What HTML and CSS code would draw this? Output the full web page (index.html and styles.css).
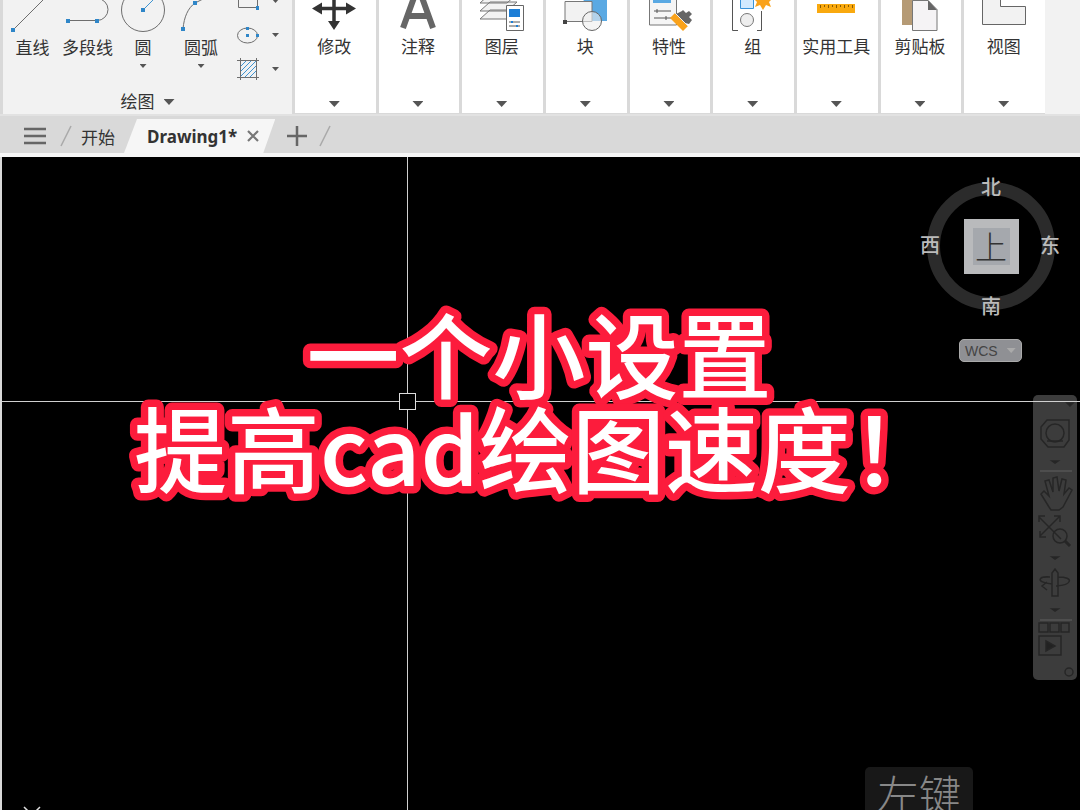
FILE: index.html
```html
<!DOCTYPE html>
<html lang="zh-CN">
<head>
<meta charset="utf-8">
<title>Drawing1*</title>
<link rel="stylesheet" href="styles.css">
</head>
<body>
<div class="app">
  <header class="ribbon">
    <section class="draw-panel">
      <div class="tools">
        <button class="tool">
          <svg width="46" height="34" viewBox="0 0 46 34"><path d="M3 30 35-2" class="ln"/><path d="M1 28h4v4H1z" class="node"/></svg>
          <span>直线</span>
        </button>
        <button class="tool">
          <svg width="48" height="34" viewBox="0 0 48 34"><path d="M4 20.500h29a10 10 0 0 0 0-22" class="ln"/><path d="M2 19h4v4H2zM31 19h4v4h-4zM31-3h4v3h-4z" class="node"/></svg>
          <span>多段线</span>
        </button>
        <button class="tool">
          <svg width="46" height="34" viewBox="0 0 46 34"><circle cx="23" cy="10" r="21.500" class="ln"/><path d="M23 10 36-3" class="blue"/><path d="M21 8h4v4h-4z" class="node"/></svg>
          <span>圆</span><i class="caret small"></i>
        </button>
        <button class="tool">
          <svg width="46" height="34" viewBox="0 0 46 34"><path d="M5 29C6 17 10 8 17 3L27-2" class="ln"/><path d="M3 27h4v4H3zM15 1h4v4h-4z" class="node"/></svg>
          <span>圆弧</span><i class="caret small"></i>
        </button>
        <div class="mini-tools">
          <button class="mini" aria-label="矩形"><svg width="24" height="24" viewBox="0 0 24 24"><path d="M2.500-2v20.500h19V-2" class="ln"/><path d="M20 17h3v4h-3z" class="node"/></svg><i class="caret small"></i></button>
          <button class="mini" aria-label="椭圆"><svg width="24" height="24" viewBox="0 0 24 24"><ellipse cx="11.500" cy="12.500" rx="10" ry="7.500" class="ln"/><path d="M10 4h3v3h-3zM10 11h3v3h-3zM20 11h3v3h-3z" class="node"/></svg><i class="caret small"></i></button>
          <button class="mini" aria-label="图案填充"><svg width="24" height="24" viewBox="0 0 24 24"><path d="m4 10 6-6M4 15 15 4M4 20 20 4M9 20 20 9M14 20l6-6" class="blue"/><path d="M4.500 1v22M20.500 1v22M1 3.500h22M1 20.500h22" class="ln"/></svg><i class="caret small"></i></button>
        </div>
      </div>
      <button class="panel-title">绘图<i class="caret"></i></button>
    </section>

    <button class="panel">
      <svg width="46" height="34" viewBox="0 0 46 34"><path d="M23-6v32M6 8.500h34" stroke="#333" stroke-width="3.500"/><path d="m1 8.500 10-6v12zM45 8.500l-10-6v12zM23 30l-6-9h12z" fill="#333"/></svg>
      <span>修改</span><i class="caret"></i>
    </button>
    <button class="panel">
      <svg width="46" height="34" viewBox="0 0 46 34"><path d="M8 28 21-8h4l13 36M12 16h22" fill="none" stroke="#666" stroke-width="6"/></svg>
      <span>注释</span><i class="caret"></i>
    </button>
    <button class="panel">
      <svg width="46" height="34" viewBox="0 0 46 34"><g fill="#f2f2f2" stroke="#777"><path d="m1 19 10-9h27l-10 9zM1 11l10-9h27l-10 9zM1 3l10-9h27L28 3z"/></g><path d="M27.500 5.500h17v25h-17z" fill="#fff" stroke="#666"/><path d="M30 9h11v8H30z" fill="#1c7ed6"/><path d="M30 22h11M30 26h11" stroke="#555"/><path d="M32 21h2v2h-2zM37 25h2v2h-2z" fill="#1c7ed6"/></svg>
      <span>图层</span><i class="caret"></i>
    </button>
    <button class="panel">
      <svg width="46" height="34" viewBox="0 0 46 34"><path d="M21-1h24v22H30z" fill="#5aa9e3"/><path d="M3 1.500h27v20H3z" fill="#f2f2f2" stroke="#777"/><circle cx="30" cy="21" r="9.500" fill="#eee" fill-opacity=".6" stroke="#666"/><path d="M1 20h4v4H1z" fill="#444"/></svg>
      <span>块</span><i class="caret"></i>
    </button>
    <button class="panel">
      <svg width="46" height="34" viewBox="0 0 46 34"><path d="M3.500-2h27v27h-27z" fill="#f5f5f5" stroke="#777"/><path d="M7-2h18v5H7z" fill="#5aa9e3"/><path d="M8 11h17M8 18h17M11 9v4M20 16v4" stroke="#555"/><path d="m30 14 6-3 1-1 3 3 3-2 3 3-3 3 3 3-3 4-4-1z" fill="#666"/><path d="m24 18 5-5 13 13-5 5z" fill="#f9a21b"/><path d="m29 13 13 13" stroke="#eee"/></svg>
      <span>特性</span><i class="caret"></i>
    </button>
    <button class="panel">
      <svg width="46" height="34" viewBox="0 0 46 34"><path d="M8 30.500H2.500V-2M27 30.500h4.500V11" fill="none" stroke="#555"/><path d="M10.500-2h13V8.500h-13z" fill="#d2eaff" stroke="#3a93d9"/><circle cx="17" cy="20" r="6.500" fill="#eee" stroke="#777"/><path d="m42-1-3 3 2 5-5-2-3 5-3-5-5 2 2-5-3-3z" fill="#f9a21b"/></svg>
      <span>组</span><i class="caret"></i>
    </button>
    <button class="panel">
      <svg width="46" height="34" viewBox="0 0 46 34"><path d="M4 4h38v9H4z" fill="#f9a90f"/><path d="M7.500 5v3M11.500 5v2M15.500 5v3M19.500 5v2M23.500 5v3M27.500 5v2M31.500 5v3M35.500 5v2M39.500 5v3" stroke="#8a5a00"/></svg>
      <span>实用工具</span><i class="caret"></i>
    </button>
    <button class="panel">
      <svg width="46" height="34" viewBox="0 0 46 34"><path d="M5-2h24v27H5z" fill="#b59a75"/><path d="M15.500.5H31l9 9v21H15.500z" fill="#f5f3f5" stroke="#777"/><path d="M31 0v10h9z" fill="#666"/></svg>
      <span>剪贴板</span><i class="caret"></i>
    </button>
    <button class="panel">
      <svg width="46" height="34" viewBox="0 0 46 34"><path d="M1.500-2v26.500h43v-18h-25V-2" fill="#f2f2f2" stroke="#666"/></svg>
      <span>视图</span><i class="caret"></i>
    </button>
  </header>

  <nav class="tabs">
    <button class="icon-btn menu" aria-label="菜单"><svg width="22" height="18" viewBox="0 0 22 18"><path d="M0 2h22M0 9h22M0 16h22" stroke="#666" stroke-width="2.500"/></svg></button>
    <svg class="slash" width="12" height="22" viewBox="0 0 12 22"><path d="M1 21 11 1" stroke="#aaa" stroke-width="1.500"/></svg>
    <button class="tab">开始</button>
    <button class="tab active">Drawing1*<svg width="12" height="12" viewBox="0 0 12 12"><path d="m1 1 10 10M11 1 1 11" stroke="#777" stroke-width="2.200"/></svg></button>
    <button class="icon-btn" aria-label="新建"><svg width="20" height="20" viewBox="0 0 20 20"><path d="M0 10h20M10 0v20" stroke="#666" stroke-width="2.500"/></svg></button>
    <svg class="slash" width="12" height="22" viewBox="0 0 12 22"><path d="M1 21 11 1" stroke="#aaa" stroke-width="1.500"/></svg>
  </nav>

  <main class="canvas">
    <div class="viewcube">
      <span class="dir north">北</span><span class="dir west">西</span>
      <button class="cube"><span>上</span></button>
      <span class="dir east">东</span><span class="dir south">南</span>
    </div>
    <button class="wcs">WCS<i></i></button>

    <aside class="navbar">
      <svg width="44" height="285" viewBox="0 0 44 285" fill="none" stroke="#262626" stroke-width="1.500">
        <path d="M34 8h6l-3 3z" fill="#222"/>
        <path d="M14 25h22v20l-5 7H15l-7-8V32z"/><circle cx="22" cy="38" r="9"/><path d="M14 46h16"/>
        <path d="m19 66 3 2 3-2z" fill="#222"/><path d="M7 76h32" stroke="#555"/>
        <path d="m16 112-8-13 3-3 5 5-4-15 4-1 4 12V83l4-1 2 14 3-12 4 1-2 14 5-6 3 2-9 17-4 3H18z"/>
        <path d="m6 122 22 22M27 121 7 141M6 127v-6h6M21 121h6v6M7 136v6h6"/><circle cx="27" cy="141" r="7"/><path d="m32 146 5 5" stroke-width="3"/>
        <path d="m19 162 3 2 3-2z" fill="#222"/>
        <path d="M19 201v-23l3-4 3 4v23zM19 189c-18-2-13-8-2-7M25 182c17 0 14 8-2 9M14 187l-5 4 5 4"/>
        <path d="m19 214 3 2 3-2z" fill="#222"/><path d="M7 225h32" stroke="#555"/>
        <path d="M6 228h9v9H6zM17 228h9v9h-9zM28 228h8v9h-8zM6 241h22v19H6z"/><path d="m13 246 9 5-9 5z" fill="#222"/>
        <circle cx="36" cy="277" r="4"/>
      </svg>
    </aside>

    <div class="cross-h"></div>
    <div class="cross-v"></div>
    <div class="pickbox"></div>

    <svg class="ucs" width="20" height="20" viewBox="0 0 20 20"><path d="m2 1 8 8 8-8M10 9v11" fill="none" stroke="#ddd" stroke-width="1.500"/></svg>
    <svg class="caption" width="100%" height="230">
      <text x="50%" y="96">一个小设置</text>
      <text x="50%" y="190">提高cad绘图速度！</text>
    </svg>
    <div class="key-hint">左键</div>
  </main>
</div>
</body>
</html>
```
FILE: styles.css
```css
* { box-sizing: border-box; }
body { margin: 0; font-family: "Noto Sans", "Noto Sans CJK SC", sans-serif; color: #333; }
button { border: 0; padding: 0; background: none; font: inherit; color: inherit; }
svg { display: block; }
.ln { fill: none; stroke: #6e6e6e; }
.blue { fill: none; stroke: #3f94d1; }
.node { fill: #2f86c8; }

.app { display: flex; flex-direction: column; height: 100vh; overflow: hidden; }

.ribbon {
  display: grid;
  grid-template-columns: 289px repeat(9, 1fr) 32px;
  gap: 3px;
  padding-left: 3px;
  background: linear-gradient(#d9d9d9, #d9d9d9) left / calc(100% - 35px) 100% no-repeat #f2f2f2;
  border-bottom: 2px solid #e2e2e2;
  font-size: 17px;
  line-height: 24px;
}
.draw-panel { background: #f2f2f2; display: flex; flex-direction: column; align-items: center; }
.tools { display: grid; grid-template-columns: 45px 65px 46px 70px 1fr; width: 100%; padding-left: 7px; height: 90px; }
.tool, .panel { display: flex; flex-direction: column; align-items: center; }
.tool span { margin-top: 2px; white-space: nowrap; }
.tool .caret { margin-top: 4px; }
.mini-tools { display: flex; flex-direction: column; gap: 10px; margin-top: -11px; }
.mini { display: flex; align-items: center; gap: 12px; }
.panel-title { display: flex; align-items: center; gap: 9px; }
.panel { background: #fff; height: 113px; padding-right: 2px; white-space: nowrap; }
.panel span { margin-top: 1px; }
.panel .caret { margin-top: auto; margin-bottom: 6px; }
.caret { width: 11px; height: 6px; background: #555; clip-path: polygon(0 0, 100% 0, 50% 100%); }
.caret.small { width: 7px; height: 4px; }

.tabs {
  display: flex;
  align-items: center;
  height: 41px;
  padding: 3px 0 0 24px;
  background: #d9d9d9;
  border-bottom: 4px solid #f6f6f6;
  font-size: 17px;
}
.menu { margin-right: 14px; }
.tab { padding: 0 9px; }
.tab.active {
  display: flex;
  align-items: center;
  gap: 10px;
  height: 34px;
  padding: 0 16px 0 23px;
  background: #f6f6f6;
  clip-path: polygon(13px 0, 100% 0, calc(100% - 12px) 100%, 0 100%);
  font-weight: 700;
}
.tabs .icon-btn:not(.menu) { margin: 0 12px; }

.canvas { position: relative; flex: 1; background: #000; border-left: 2px solid #d9d9d9; overflow: hidden; }
.cross-h, .cross-v { position: absolute; background: #d0d0d0; }
.cross-h { left: 0; right: 0; top: 244px; height: 1px; }
.cross-v { top: 0; bottom: 0; left: 405px; width: 1px; }
.pickbox { position: absolute; left: 397px; top: 236px; width: 17px; height: 17px; border: 1px solid #ddd; background: #000; }

.viewcube {
  position: absolute;
  top: 25px;
  right: 25px;
  width: 128px;
  height: 128px;
  border: 13px solid #2b2b2b;
  border-radius: 50%;
  display: grid;
  place-items: center;
}
.cube { width: 55px; height: 55px; padding: 9px; background: #b9babc; }
.cube span { display: grid; place-items: center; height: 37px; background: #a5a8ad; color: #333; font-size: 32px; font-weight: 300; line-height: 37px; }
.dir { position: absolute; font-size: 20px; font-weight: 500; line-height: 28px; color: #bbb; }
.north { top: -21px; }
.south { bottom: -24px; }
.west { left: -20px; }
.east { right: -18px; }
.wcs {
  position: absolute;
  top: 182px;
  right: 58px;
  width: 63px;
  height: 23px;
  display: flex;
  align-items: center;
  gap: 9px;
  padding-left: 5px;
  background: #8f9094;
  border: 1px solid #aaa;
  border-radius: 5px;
  color: #444;
  font-family: "Liberation Sans", sans-serif;
  font-size: 14px;
}
.wcs i { width: 9px; height: 5px; background: #aaa; clip-path: polygon(0 0, 100% 0, 50% 100%); }

.navbar { position: absolute; top: 238px; right: 3px; background: #3c3c3c; border-radius: 5px; }
.ucs { position: absolute; left: 20px; bottom: -16px; }

.caption {
  position: absolute;
  top: 139px;
  left: -2px;
  font-family: "Noto Sans CJK SC", sans-serif;
  font-size: 93px;
  font-weight: 500;
  text-anchor: middle;
  fill: #fff;
  stroke: #fc1c3c;
  stroke-width: 15px;
  stroke-linejoin: round;
  paint-order: stroke;
  overflow: visible;
}
.key-hint {
  position: absolute;
  right: 107px;
  bottom: -17px;
  padding: 0 12px;
  background: #181818;
  border-radius: 5px;
  color: #888;
  font-family: "Liberation Serif", "Noto Sans CJK SC", serif;
  font-size: 42px;
  font-weight: 300;
  line-height: 60px;
}
```
